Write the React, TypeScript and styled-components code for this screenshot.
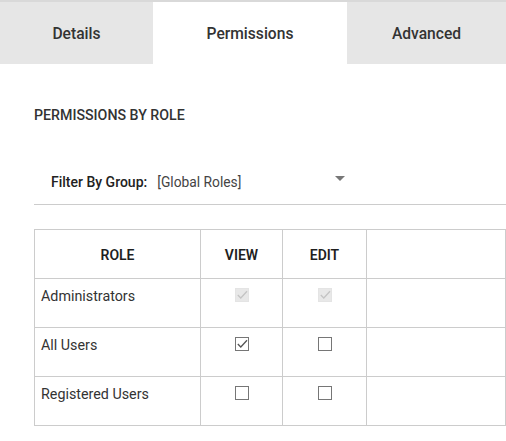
import React from 'react';
import styled, { createGlobalStyle } from 'styled-components';

const Global = createGlobalStyle`
  body {
    margin: 0;
    background: #ffffff;
    font-family: Roboto, "Liberation Sans", sans-serif;
    color: #333333;
  }
`;

const Page = styled.div`
  width: 506px;
  height: 441px;
  overflow: hidden;
  background: #ffffff;
`;

const Tabs = styled.div`
  display: grid;
  grid-template-columns: 153px 194px 1fr;
  height: 64px;
  border-top: 2px solid #d9d9d9;
  box-sizing: border-box;
`;

const Tab = styled.div<{ $active?: boolean }>`
  display: flex;
  align-items: center;
  justify-content: center;
  background: ${(p) => (p.$active ? '#ffffff' : '#e6e6e6')};
  font-size: 15.6px;
  font-weight: 500;
  color: #333333;
  padding-top: 2px;
`;

const Body = styled.div`
  padding: 0 0 0 34px;
`;

const Heading = styled.div`
  margin-top: 43px;
  font-size: 14.2px;
  font-weight: 500;
  color: #333;
  line-height: 16px;
`;

const FilterRow = styled.div`
  margin-top: 51px;
  display: flex;
  align-items: center;
  padding: 0 0 14px 17px;
  border-bottom: 1px solid #cccccc;
  line-height: 16px;
`;

const FilterLabel = styled.span`
  font-size: 14px;
  font-weight: 500;
  margin-right: 10px;
  color: #222;
`;

const FilterValue = styled.span`
  font-size: 13.8px;
  color: #444;
  width: 178px;
`;

const Caret = styled.span`
  width: 0;
  height: 0;
  border-left: 5px solid transparent;
  border-right: 5px solid transparent;
  border-top: 5px solid #777;
  margin-top: -8px;
`;

const Table = styled.div`
  margin-top: 24px;
  display: grid;
  grid-template-columns: 166px 82px 84px 1fr;
  border-top: 1px solid #cccccc;
  border-left: 1px solid #cccccc;
`;

const Cell = styled.div<{ $head?: boolean; $center?: boolean }>`
  border-right: 1px solid #cccccc;
  border-bottom: 1px solid #cccccc;
  font-size: ${(p) => (p.$head ? '14px' : '14.3px')};
  font-weight: ${(p) => (p.$head ? 600 : 400)};
  color: ${(p) => (p.$head ? '#1f1f1f' : '#333')};
  display: flex;
  justify-content: ${(p) => (p.$center ? 'center' : 'flex-start')};
  align-items: ${(p) => (p.$head ? 'center' : 'flex-start')};
  padding: ${(p) => (p.$head ? '1px 0 0' : p.$center ? '9px 0 0' : '9px 0 0 6px')};
  height: ${(p) => (p.$head ? '47px' : '39px')};
`;

const Box = styled.span<{ $disabled?: boolean }>`
  width: 14px;
  height: 14px;
  box-sizing: border-box;
  border: 1px solid ${(p) => (p.$disabled ? '#e4e4e4' : '#767676')};
  background: ${(p) => (p.$disabled ? '#e8e8e8' : '#fff')};
  display: flex;
  align-items: center;
  justify-content: center;
`;

const Check = ({ color }: { color: string }) => (
  <svg width="12" height="12" viewBox="0 0 12 12">
    <path d="M1.8 6 L4.8 9 L11 2.2" fill="none" stroke={color} strokeWidth="1.3" />
  </svg>
);

const CheckBox = ({ checked, disabled }: { checked?: boolean; disabled?: boolean }) => (
  <Box $disabled={disabled}>
    {checked && <Check color={disabled ? '#c4c4c4' : '#555'} />}
  </Box>
);

const rows = [
  { name: 'Administrators', view: true, edit: true, disabled: true },
  { name: 'All Users', view: true, edit: false, disabled: false },
  { name: 'Registered Users', view: false, edit: false, disabled: false },
];

export default function App() {
  return (
    <Page>
      <Global />
      <Tabs>
        <Tab>Details</Tab>
        <Tab $active>Permissions</Tab>
        <Tab>Advanced</Tab>
      </Tabs>
      <Body>
        <Heading>PERMISSIONS BY ROLE</Heading>
        <FilterRow>
          <FilterLabel>Filter By Group:</FilterLabel>
          <FilterValue>[Global Roles]</FilterValue>
          <Caret />
        </FilterRow>
        <Table>
          <Cell $head $center>ROLE</Cell>
          <Cell $head $center>VIEW</Cell>
          <Cell $head $center>EDIT</Cell>
          <Cell $head />
          {rows.map((r) => (
            <React.Fragment key={r.name}>
              <Cell>{r.name}</Cell>
              <Cell $center>
                <CheckBox checked={r.view} disabled={r.disabled} />
              </Cell>
              <Cell $center>
                <CheckBox checked={r.edit} disabled={r.disabled} />
              </Cell>
              <Cell />
            </React.Fragment>
          ))}
        </Table>
      </Body>
    </Page>
  );
}
